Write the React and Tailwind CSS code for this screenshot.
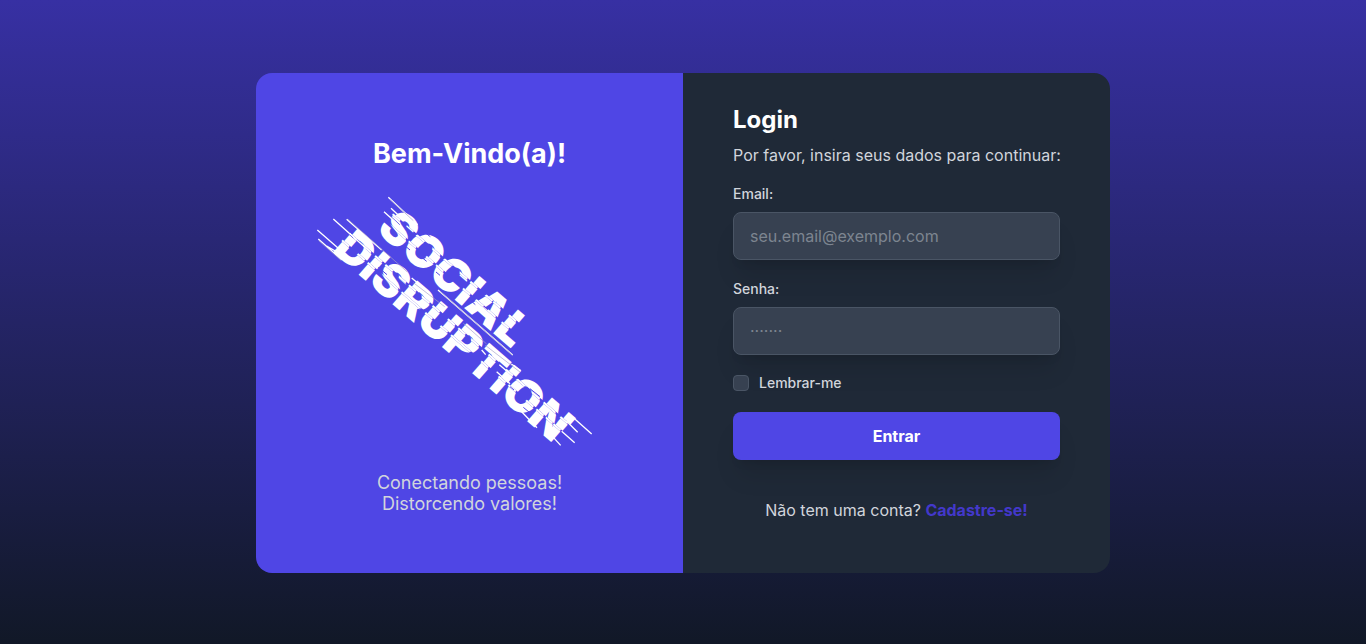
import React from "react";

// Each word is cut into bands parallel to its baseline; every band is nudged along it.
const socialBands = [
  { y: -56, h: 19, dx: 4 },
  { y: -37, h: 2, dx: 1 },
  { y: -35, h: 8, dx: 2 },
  { y: -27, h: 2, dx: 0 },
  { y: -25, h: 21, dx: 1 },
];

const disruptionBands = [
  { y: -10, h: 16, dx: 4 },
  { y: 6, h: 2, dx: 1 },
  { y: 8, h: 8, dx: 2 },
  { y: 16, h: 2, dx: 0 },
  { y: 18, h: 22, dx: 1 },
];

function GlitchWord({ id, x, y, bands, children }) {
  const last = bands.length - 1;
  return (
    <g>
      <defs>
        {bands.map((b, i) => (
          <clipPath id={`${id}-${i}`} key={i}>
            <rect x="0" y={b.y} width="400" height={b.h} />
          </clipPath>
        ))}
      </defs>
      {bands.map((b, i) => (
        <g key={i} transform={`translate(${b.dx} 0)`}>
          <g clipPath={`url(#${id}-${i})`}>
            {i === last ? (
              <text
                id={id}
                x={x}
                y={y}
                className="font-['Inter',sans-serif] text-[47px] font-black"
              >
                {children}
              </text>
            ) : (
              <use href={`#${id}`} />
            )}
          </g>
        </g>
      ))}
    </g>
  );
}

function Logo() {
  return (
    <svg
      viewBox="0 0 320 272"
      className="h-[272px] w-80 max-w-full"
      role="img"
      aria-label="Social Disruption"
    >
      <g transform="translate(0 6)">
        <g transform="rotate(41)" fill="#fff">
          <GlitchWord id="social" x={75} y={-12} bands={socialBands}>
            SOCIAL
          </GlitchWord>
          <GlitchWord id="disruption" x={55} y={32} bands={disruptionBands}>
            DISRUPTION
          </GlitchWord>
        </g>
        <g transform="scale(0.33333)" fill="none">
          <path
            stroke="#4f46e5"
            strokeWidth="3"
            d="M245 82l24 22M345 128l16 12M288 170l12 10M330 198l20 16M378 246l12 10M480 330l16 14M100 118l30 26M205 232l26 22M600 590l12 10M660 596l30 24M640 652l24 20"
          />
          <path
            stroke="#fff"
            strokeWidth="4"
            d="M235 22l88 82M243 55l28 26M222 65l44 40M22 120l62 54M25 147l70 62M50 168l44 26M70 87l98 88M110 88l105 92M384 300l224 195M305 264l50 42M515 480l12 14M560 545l40 36M568 524l30 26M604 522l28 20M635 665l46 48M782 676l63 56M755 724l39 34M728 740l24 26M770 694l33 33"
          />
          <path
            stroke="#a5a0c8"
            strokeWidth="2"
            d="M114 88l178 158M310 278l94 72M460 400l70 62M526 466l104 80M240 28l70 64M26 152l68 60M390 304l218 192"
          />
        </g>
      </g>
    </svg>
  );
}

const fieldClass =
  "h-12 w-full rounded-lg border border-gray-600 bg-[#374151] px-4 text-base text-white shadow-xl outline-none placeholder:text-[#7d8590] focus:border-indigo-500";

export default function App() {
  return (
    <div className="flex min-h-screen items-center justify-center bg-[linear-gradient(to_bottom,#3730a3,#111827)] px-4 pt-[18px] pb-4 font-['Inter',sans-serif]">
      <main className="grid min-h-[500px] w-full max-w-[854px] grid-cols-1 overflow-hidden rounded-2xl md:grid-cols-2">
        <section className="flex flex-col items-center justify-center bg-[#4f46e5] pt-1 text-center">
          <h1 className="text-[27px] leading-9 font-bold text-white">Bem-Vindo(a)!</h1>
          <div className="mt-3 mb-4">
            <Logo />
          </div>
          <p className="text-lg leading-[21px] text-gray-300">
            Conectando pessoas!
            <br />
            Distorcendo valores!
          </p>
        </section>

        <section className="flex flex-col justify-center bg-[#1f2937] px-[50px] py-[31px]">
          <h2 className="text-2xl font-bold text-white">Login</h2>
          <p className="mt-[7px] text-base text-gray-300 md:whitespace-nowrap">
            Por favor, insira seus dados para continuar:
          </p>
          <form className="mt-[17px] flex flex-col" onSubmit={(e) => e.preventDefault()}>
            <label htmlFor="email" className="mb-2 text-sm font-medium text-gray-300">
              Email:
            </label>
            <input id="email" type="email" placeholder="seu.email@exemplo.com" className={fieldClass} />
            <label htmlFor="senha" className="mt-[19px] mb-2 text-sm font-medium text-gray-300">
              Senha:
            </label>
            <input id="senha" type="password" placeholder="·······" className={fieldClass} />
            <div className="mt-5 flex h-4 items-center gap-[10px]">
              <input
                id="lembrar"
                type="checkbox"
                className="size-4 appearance-none rounded-sm border border-gray-600 bg-[#374151] checked:bg-indigo-600"
              />
              <label htmlFor="lembrar" className="text-sm font-medium text-gray-300">
                Lembrar-me
              </label>
            </div>
            <button
              type="submit"
              className="mt-[21px] h-12 rounded-lg bg-[#4f46e5] text-base font-bold text-white shadow-xl"
            >
              Entrar
            </button>
          </form>
          <p className="mt-[38px] mb-5 text-center text-base text-gray-300">
            Não tem uma conta?{" "}
            <a href="#cadastro" className="font-bold text-[#4338ca]">
              Cadastre-se!
            </a>
          </p>
        </section>
      </main>
    </div>
  );
}
